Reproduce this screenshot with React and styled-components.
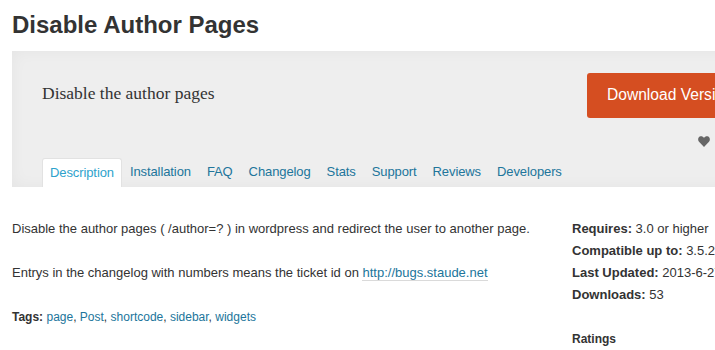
import React from "react";
import styled, { createGlobalStyle } from "styled-components";

const Global = createGlobalStyle`
  html, body { margin: 0; padding: 0; background: #fff; overflow: hidden; }
  body { font-family: "Liberation Sans", Arial, sans-serif; color: #333; }
  * { box-sizing: border-box; }
`;

const Page = styled.div`
  width: 807px;
  padding: 0 0 0 12px;
`;

const Title = styled.h1`
  margin: 10px 0 11px;
  font-size: 24px;
  line-height: 30px;
  font-weight: bold;
  color: #333;
`;

const Banner = styled.div`
  background: #eeeeee;
  box-shadow: inset 0 0 16px rgba(0, 0, 0, 0.045);
  padding: 22px 0 0 30px;
  display: flex;
  flex-direction: column;
`;

const TopRow = styled.div`
  display: flex;
  align-items: flex-start;
  justify-content: space-between;
`;

const Subtitle = styled.div`
  margin-top: 8px;
  font-family: "Liberation Serif", Georgia, serif;
  font-size: 17.5px;
  line-height: 24px;
  color: #333;
`;

const RightCol = styled.div`
  display: flex;
  flex-direction: column;
  width: 220px;
  flex-shrink: 0;
`;

const DownloadButton = styled.a`
  display: block;
  height: 45px;
  line-height: 44px;
  padding: 0 20px;
  background: #d54e21;
  border-radius: 3px;
  color: #fff;
  font-size: 15.6px;
  white-space: nowrap;
  text-decoration: none;
`;

const Fav = styled.a`
  display: flex;
  align-items: center;
  gap: 12px;
  margin: 15px 0 0 111px;
  height: 16px;
  color: #555;
  font-size: 13px;
  white-space: nowrap;
  text-decoration: none;
`;

const Tabs = styled.ul`
  display: flex;
  list-style: none;
  margin: 9px 0 0;
  padding: 0;
`;

const Tab = styled.li`
  height: 29px;
  line-height: 28px;
  padding: 0 ${(p) => (p.$active ? 7 : 8)}px;
  font-size: 13px;
  letter-spacing: -0.1px;
  color: ${(p) => (p.$active ? "#2ea2cc" : "#21759b")};
  background: ${(p) => (p.$active ? "#fff" : "transparent")};
  border: ${(p) => (p.$active ? "1px solid #e2e2e2" : "none")};
  border-bottom: none;
  border-radius: 3px 3px 0 0;
  white-space: nowrap;
`;

const Content = styled.div`
  display: grid;
  grid-template-columns: 530px 1fr;
  column-gap: 30px;
  margin-top: 31px;
`;

const Main = styled.div`
  font-size: 13px;
  line-height: 22px;
  color: #333;
`;

const Para = styled.p`
  margin: 0 0 22px;
`;

const Link = styled.a`
  color: #21759b;
  text-decoration: none;
  border-bottom: 1px solid #dadada;
`;

const TagLine = styled.p`
  margin: 0;
  font-size: 12px;
  line-height: 22px;
`;

const TagLink = styled.a`
  color: #21759b;
  text-decoration: none;
`;

const Side = styled.div`
  font-size: 13px;
  line-height: 22px;
  color: #333;
  white-space: nowrap;
`;

const MetaRow = styled.div``;

const SideHeading = styled.h4`
  margin: 22px 0 0;
  font-size: 12px;
  line-height: 22px;
  font-weight: bold;
`;

const tabs = [
  "Description",
  "Installation",
  "FAQ",
  "Changelog",
  "Stats",
  "Support",
  "Reviews",
  "Developers",
];

const meta = [
  ["Requires:", "3.0 or higher"],
  ["Compatible up to:", "3.5.2"],
  ["Last Updated:", "2013-6-27"],
  ["Downloads:", "53"],
];

const tags = ["page", "Post", "shortcode", "sidebar", "widgets"];

export default function App() {
  return (
    <>
      <Global />
      <Page>
        <Title>Disable Author Pages</Title>
        <Banner>
          <TopRow>
            <Subtitle>Disable the author pages</Subtitle>
            <RightCol>
              <DownloadButton href="#">Download Version 0.7</DownloadButton>
              <Fav href="#">
                <svg width="12" height="11" viewBox="0 0 12 11" aria-hidden="true">
                  <path
                    d="M6 11 L1 5.8 C-0.4 4.3 0 1.6 1.7 0.6 C3.2 -0.2 4.9 0.3 6 1.8 C7.1 0.3 8.8 -0.2 10.3 0.6 C12 1.6 12.4 4.3 11 5.8 Z"
                    fill="#666"
                  />
                </svg>
                <span>Favorite</span>
              </Fav>
            </RightCol>
          </TopRow>
          <Tabs>
            {tabs.map((t, i) => (
              <Tab key={t} $active={i === 0}>
                {t}
              </Tab>
            ))}
          </Tabs>
        </Banner>
        <Content>
          <Main>
            <Para>
              Disable the author pages ( /author=? ) in wordpress and redirect the user to another page.
            </Para>
            <Para>
              Entrys in the changelog with numbers means the ticket id on{" "}
              <Link href="#">http://bugs.staude.net</Link>
            </Para>
            <TagLine>
              <b>Tags:</b>{" "}
              {tags.map((t, i) => (
                <React.Fragment key={t}>
                  <TagLink href="#">{t}</TagLink>
                  {i < tags.length - 1 ? ", " : ""}
                </React.Fragment>
              ))}
            </TagLine>
          </Main>
          <Side>
            {meta.map(([k, v]) => (
              <MetaRow key={k}>
                <b>{k}</b> {v}
              </MetaRow>
            ))}
            <SideHeading>Ratings</SideHeading>
          </Side>
        </Content>
      </Page>
    </>
  );
}
